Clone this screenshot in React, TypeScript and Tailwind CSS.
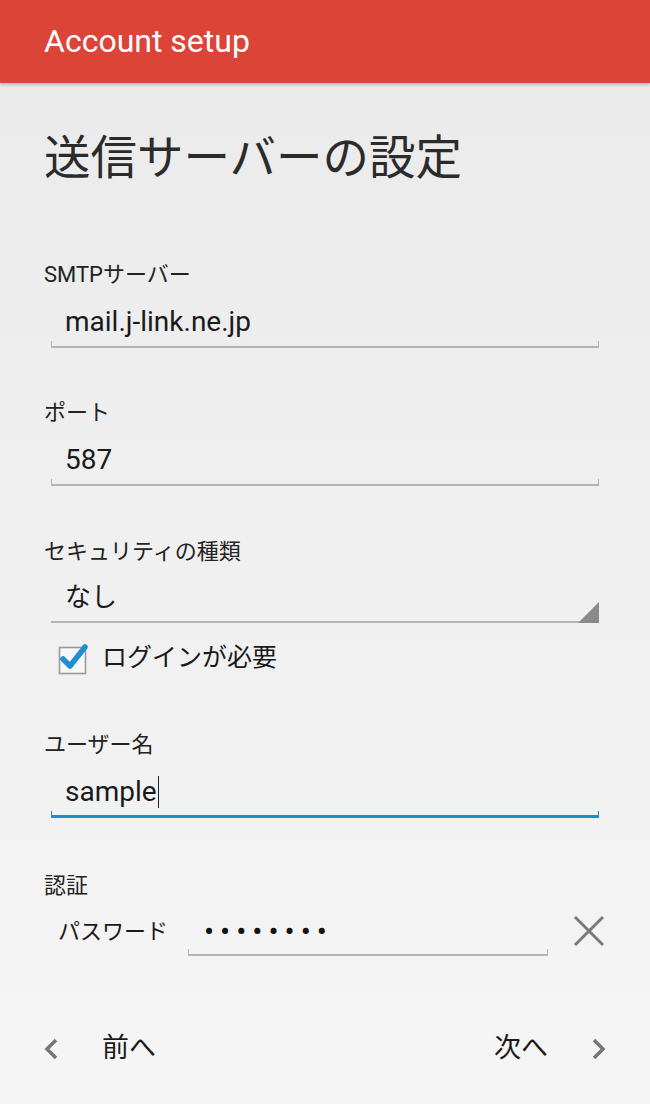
import React from 'react';

const font = {
  fontFamily: 'Roboto, "Noto Sans CJK JP", "Noto Sans", sans-serif',
};

function Underline({ focused = false }: { focused?: boolean }) {
  return (
    <div
      className={`mx-[7px] h-[7px] border-x ${
        focused
          ? 'border-b-[3px] border-[#1a8fc9]'
          : 'border-b-2 border-[#b4b4b4]'
      }`}
    />
  );
}

function Field({
  label,
  value,
  focused = false,
}: {
  label: string;
  value: string;
  focused?: boolean;
}) {
  return (
    <div>
      <div className="h-[28px] text-[22px] leading-[28px] text-[#222]">{label}</div>
      <div className="mt-[15px] flex h-[36px] items-center pl-[21px] text-[28px] leading-[36px] text-[#1a1a1a]">
        <span>{value}</span>
        {focused && <span className="ml-[1px] inline-block h-[32px] w-[1px] bg-[#222]" />}
      </div>
      <div className="mt-[1px]">
        <Underline focused={focused} />
      </div>
    </div>
  );
}

function CheckBox() {
  return (
    <svg width="34" height="34" viewBox="0 0 34 34">
      <rect x="4.5" y="6.5" width="26" height="26" fill="#f7f7f7" stroke="#9a9a9a" strokeWidth="1.6" />
      <path
        d="M8 18 L15 25 L30 6"
        fill="none"
        stroke="#1f8fd0"
        strokeWidth="5.5"
        strokeLinecap="round"
        strokeLinejoin="round"
      />
    </svg>
  );
}

export default function App() {
  return (
    <div className="flex h-[1104px] w-[650px] flex-col overflow-hidden bg-[#f0f0f0]" style={font}>
      <header className="relative z-10 flex h-[83px] shrink-0 items-center bg-[#db4437] pl-[44px] shadow-[0_2px_3px_rgba(0,0,0,0.2)]">
        <h1 className="pb-[2px] text-[32px] font-normal text-white">Account setup</h1>
      </header>

      <main className="flex-1 bg-gradient-to-b from-[#ebebeb] to-[#f4f4f4] px-[44px]">
        <h2 className="mt-[51px] h-[48px] text-[46.5px] leading-[48px] font-normal text-[#2b2b2b]">
          送信サーバーの設定
        </h2>

        <div className="mt-[79px]">
          <Field label="SMTPサーバー" value="mail.j-link.ne.jp" />
        </div>

        <div className="mt-[51px]">
          <Field label="ポート" value="587" />
        </div>

        <div className="mt-[52px]">
          <div className="h-[28px] text-[22px] leading-[28px] text-[#222]">セキュリティの種類</div>
          <div className="mt-[13px] flex h-[36px] items-center pl-[21px] text-[26px] leading-[36px] text-[#1a1a1a]">
            なし
          </div>
          <div className="relative mx-[7px] mt-[1px] h-[7px] border-b-2 border-[#b4b4b4]">
            <svg className="absolute right-0 bottom-[-2px]" width="21" height="21" viewBox="0 0 21 21">
              <polygon points="0,21 21,21 21,0" fill="#8a8a8a" />
            </svg>
          </div>
        </div>

        <div className="mt-[17px] flex h-[36px] items-center pl-[11px]">
          <CheckBox />
          <span className="ml-[13px] text-[25px] text-[#1a1a1a]">ログインが必要</span>
        </div>

        <div className="mt-[55px]">
          <Field label="ユーザー名" value="sample" focused />
        </div>

        <div className="mt-[54px] h-[28px] text-[22px] leading-[28px] text-[#222]">認証</div>
        <div className="mt-[13px] flex items-start">
          <div className="flex h-[36px] w-[144px] items-center pl-[14px] text-[22px] text-[#1a1a1a]">
            パスワード
          </div>
          <div className="w-[360px]">
            <div className="flex h-[36px] items-center pl-[16px] text-[30px] tracking-[6px] text-[#111]">
              ••••••••
            </div>
            <div className="h-[7px] border-x border-b-2 border-[#b4b4b4]" />
          </div>
          <div className="ml-auto flex h-[36px] items-center pr-[1px]">
            <svg width="32" height="32" viewBox="0 0 32 32">
              <path d="M2 2 L30 30 M30 2 L2 30" stroke="#7a7a7a" strokeWidth="3" />
            </svg>
          </div>
        </div>
      </main>

      <footer className="flex h-[111px] shrink-0 items-center bg-[#f5f5f5] px-[44px]">
        <svg width="14" height="22" viewBox="0 0 14 22">
          <path d="M12 2 L3 11 L12 20" fill="none" stroke="#777" strokeWidth="3.5" />
        </svg>
        <span className="ml-[44px] text-[27px] text-[#1a1a1a]">前へ</span>
        <span className="ml-auto text-[27px] text-[#1a1a1a]">次へ</span>
        <svg className="ml-[44px]" width="14" height="22" viewBox="0 0 14 22">
          <path d="M2 2 L11 11 L2 20" fill="none" stroke="#777" strokeWidth="3.5" />
        </svg>
      </footer>
    </div>
  );
}
